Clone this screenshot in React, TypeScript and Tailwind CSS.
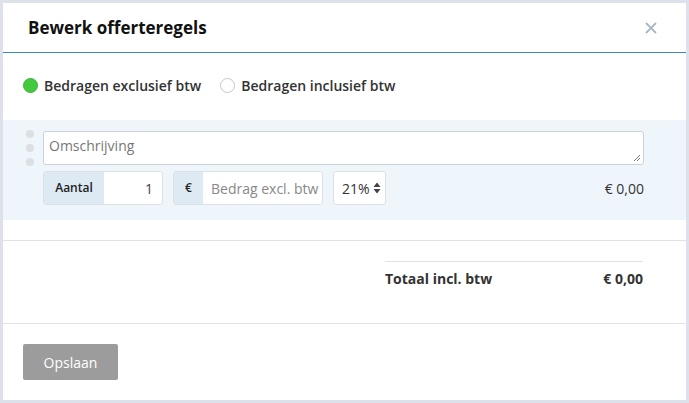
import React from "react";

const font = { fontFamily: '"Open Sans", "Noto Sans", sans-serif' };

function DragDots() {
  return (
    <div className="-mt-[1px] flex w-[20px] flex-col items-center gap-[6px]">
      <span className="h-[8px] w-[8px] rounded-full bg-[#dce0e5]" />
      <span className="h-[8px] w-[8px] rounded-full bg-[#dce0e5]" />
      <span className="h-[8px] w-[8px] rounded-full bg-[#dce0e5]" />
    </div>
  );
}

function ResizeGrip() {
  return (
    <svg className="absolute bottom-[2px] right-[2px]" width="8" height="8" viewBox="0 0 8 8">
      <path d="M7 1 L1 7 M7 4 L4 7" stroke="#777" strokeWidth="1" />
    </svg>
  );
}

export default function App() {
  return (
    <div className="h-[403px] w-[689px] bg-[#dde2ea] p-[3px]" style={font}>
      <div className="flex h-full w-full flex-col bg-white text-[#333]">
        {/* header */}
        <div className="flex h-[50px] shrink-0 items-center justify-between border-b border-[#3a8dc1] pl-[25px] pr-[29px]">
          <h2 className="text-[17px] font-bold text-[#111]">Bewerk offerteregels</h2>
          <svg width="12" height="12" viewBox="0 0 12 12">
            <path d="M1 1 L11 11 M11 1 L1 11" stroke="#a9b8c4" strokeWidth="1.8" />
          </svg>
        </div>

        {/* radio choice */}
        <div className="flex h-[67px] shrink-0 items-center gap-[19px] pb-[2px] pl-[20px]">
          <label className="flex items-center gap-[6px] text-[14px] font-semibold">
            <span className="h-[15px] w-[15px] rounded-full border border-[#3cb33c] bg-[#42c93d]" />
            Bedragen exclusief btw
          </label>
          <label className="flex items-center gap-[6px] text-[14px] font-semibold">
            <span className="h-[15px] w-[15px] rounded-full border border-[#c4c8cc] bg-white" />
            Bedragen inclusief btw
          </label>
        </div>

        {/* line editor */}
        <div className="flex h-[100px] shrink-0 bg-[#eef6fc] pl-[17px] pr-[42px] pt-[11px]">
          <DragDots />
          <div className="ml-[3px] flex flex-1 flex-col gap-[6px]">
            <div className="relative h-[34px] rounded-[3px] border border-[#cdd1d5] bg-white px-[5px] pt-[3px] text-[14px] text-[#777]">
              Omschrijving
              <ResizeGrip />
            </div>
            <div className="flex h-[34px] items-center">
              <div className="flex h-full w-[120px] overflow-hidden rounded-[3px] border border-[#dde1e5]">
                <span className="flex w-[60px] items-center justify-center bg-[#dde9f3] text-[12px] font-semibold text-[#222]">
                  Aantal
                </span>
                <span className="flex flex-1 items-center justify-end bg-white pr-[9px] text-[14px] text-[#444]">1</span>
              </div>
              <div className="ml-[10px] flex h-full w-[150px] overflow-hidden rounded-[3px] border border-[#dde1e5]">
                <span className="flex w-[29px] items-center justify-center bg-[#dde9f3] text-[12px] font-semibold text-[#222]">
                  €
                </span>
                <span className="flex flex-1 items-center bg-white pl-[8px] text-[14px] text-[#888]">Bedrag excl. btw</span>
              </div>
              <div className="ml-[10px] flex h-full w-[53px] items-center gap-[3px] rounded-[3px] border border-[#dde1e5] bg-white pl-[8px] text-[14px] text-[#333]">
                21%
                <svg width="8" height="12" viewBox="0 0 8 12">
                  <path d="M4 0.5 L7.5 5 L0.5 5 Z M0.5 7 L7.5 7 L4 11.5 Z" fill="#444" />
                </svg>
              </div>
              <span className="ml-auto text-[14px] text-[#333]">€ 0,00</span>
            </div>
          </div>
        </div>

        <div className="h-[20px] shrink-0" />

        {/* totals */}
        <div className="flex h-[83px] shrink-0 justify-end border-t border-[#e2e1ea] pr-[43px] pt-[20px]">
          <div className="w-[258px]">
            <div className="flex items-center justify-between border-t border-[#e2e1ea] pt-[6px] text-[14px] font-bold text-[#333]">
              <span>Totaal incl. btw</span>
              <span>€ 0,00</span>
            </div>
          </div>
        </div>

        {/* footer */}
        <div className="flex flex-1 items-start border-t border-[#e2e2e8] pl-[20px] pt-[20px]">
          <button className="h-[36px] w-[95px] rounded-[2px] bg-[#9c9c9c] text-[14px] text-white">Opslaan</button>
        </div>
      </div>
    </div>
  );
}
